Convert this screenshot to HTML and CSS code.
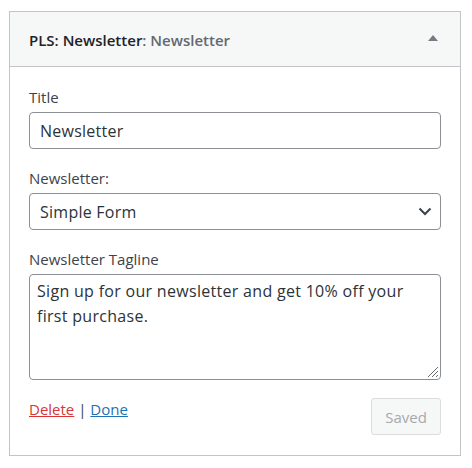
FILE: index.html
```html
<!DOCTYPE html>
<html>
<head>
<meta charset="utf-8">
<link rel="stylesheet" href="styles.css">
</head>
<body>
<div class="widget">
  <div class="widget-top">
    <h3 class="widget-title">PLS: Newsletter<span class="in-title">: Newsletter</span></h3>
    <svg class="toggle" width="10" height="6" viewBox="0 0 10 6"><path d="M0 6 L5 0 L10 6 Z" fill="#787c82"/></svg>
  </div>
  <div class="widget-inside">
    <div class="field">
      <label class="label">Title</label>
      <div class="input">Newsletter</div>
    </div>
    <div class="field">
      <label class="label">Newsletter:</label>
      <div class="input select">Simple Form
        <svg class="chev" width="14" height="9" viewBox="0 0 14 9"><path d="M1.5 1.5 L7 7 L12.5 1.5" fill="none" stroke="#3c434a" stroke-width="2"/></svg>
      </div>
    </div>
    <div class="field">
      <label class="label">Newsletter Tagline</label>
      <div class="textarea">Sign up for our newsletter and get 10% off your first purchase.
        <svg class="grip" width="12" height="12" viewBox="0 0 12 12"><path d="M11 1 L1 11 M11 5 L5 11 M11 9 L9 11" stroke="#6a6e73" stroke-width="1"/></svg>
      </div>
    </div>
    <div class="actions">
      <div class="links"><a class="delete">Delete</a> | <a class="done">Done</a></div>
      <button class="saved">Saved</button>
    </div>
  </div>
</div>
</body>
</html>
```
FILE: styles.css
```css
html, body { margin: 0; padding: 0; background: #fff; }
body {
  font-family: "Open Sans", "Noto Sans", sans-serif;
  padding: 11px 11px 0 9px;
  color: #3c434a;
}
.widget {
  width: 450px;
  border: 1px solid #c3c4c7;
  background: #fff;
}
.widget-top {
  height: 54px;
  background: #f6f7f7;
  border-bottom: 1px solid #c3c4c7;
  display: flex;
  align-items: center;
  justify-content: space-between;
  padding: 0 22px 0 19px;
}
.widget-title {
  margin: 0;
  font-size: 15px;
  font-weight: 600;
  color: #1d2327;
  position: relative;
  top: 1px;
}
.in-title { color: #646970; }
.toggle { position: relative; top: -1px; }
.widget-inside {
  padding: 20px 19px 20px 19px;
}
.field { margin-bottom: 19px; }
.label {
  display: block;
  font-size: 15px;
  line-height: 21px;
  margin-bottom: 4px;
  color: #3c434a;
}
.input {
  box-sizing: border-box;
  height: 37px;
  border: 1px solid #8c8f94;
  border-radius: 4px;
  padding: 0 10px;
  font-size: 16px;
  color: #2c3338;
  display: flex;
  align-items: center;
  justify-content: space-between;
  letter-spacing: 0.25px;
}
.select { padding-right: 8px; }
.textarea {
  box-sizing: border-box;
  height: 106px;
  border: 1px solid #8c8f94;
  border-radius: 4px;
  padding: 4px 7px;
  font-size: 16px;
  line-height: 25px;
  color: #2c3338;
  letter-spacing: 0.3px;
  position: relative;
}
.grip { position: absolute; right: 1px; bottom: 1px; }
.actions {
  display: flex;
  justify-content: space-between;
  align-items: flex-start;
  margin-top: -1px;
}
.links {
  font-size: 15px;
  color: #3c434a;
  padding-top: 1px;
}
.delete { color: #d63638; text-decoration: underline; }
.done { color: #2271b1; text-decoration: underline; }
.saved {
  width: 70px;
  height: 37px;
  border: 1px solid #dcdcde;
  border-radius: 3px;
  background: #f6f7f7;
  color: #a7aaad;
  font-family: inherit;
  font-size: 15px;
  padding: 0;
}
```
